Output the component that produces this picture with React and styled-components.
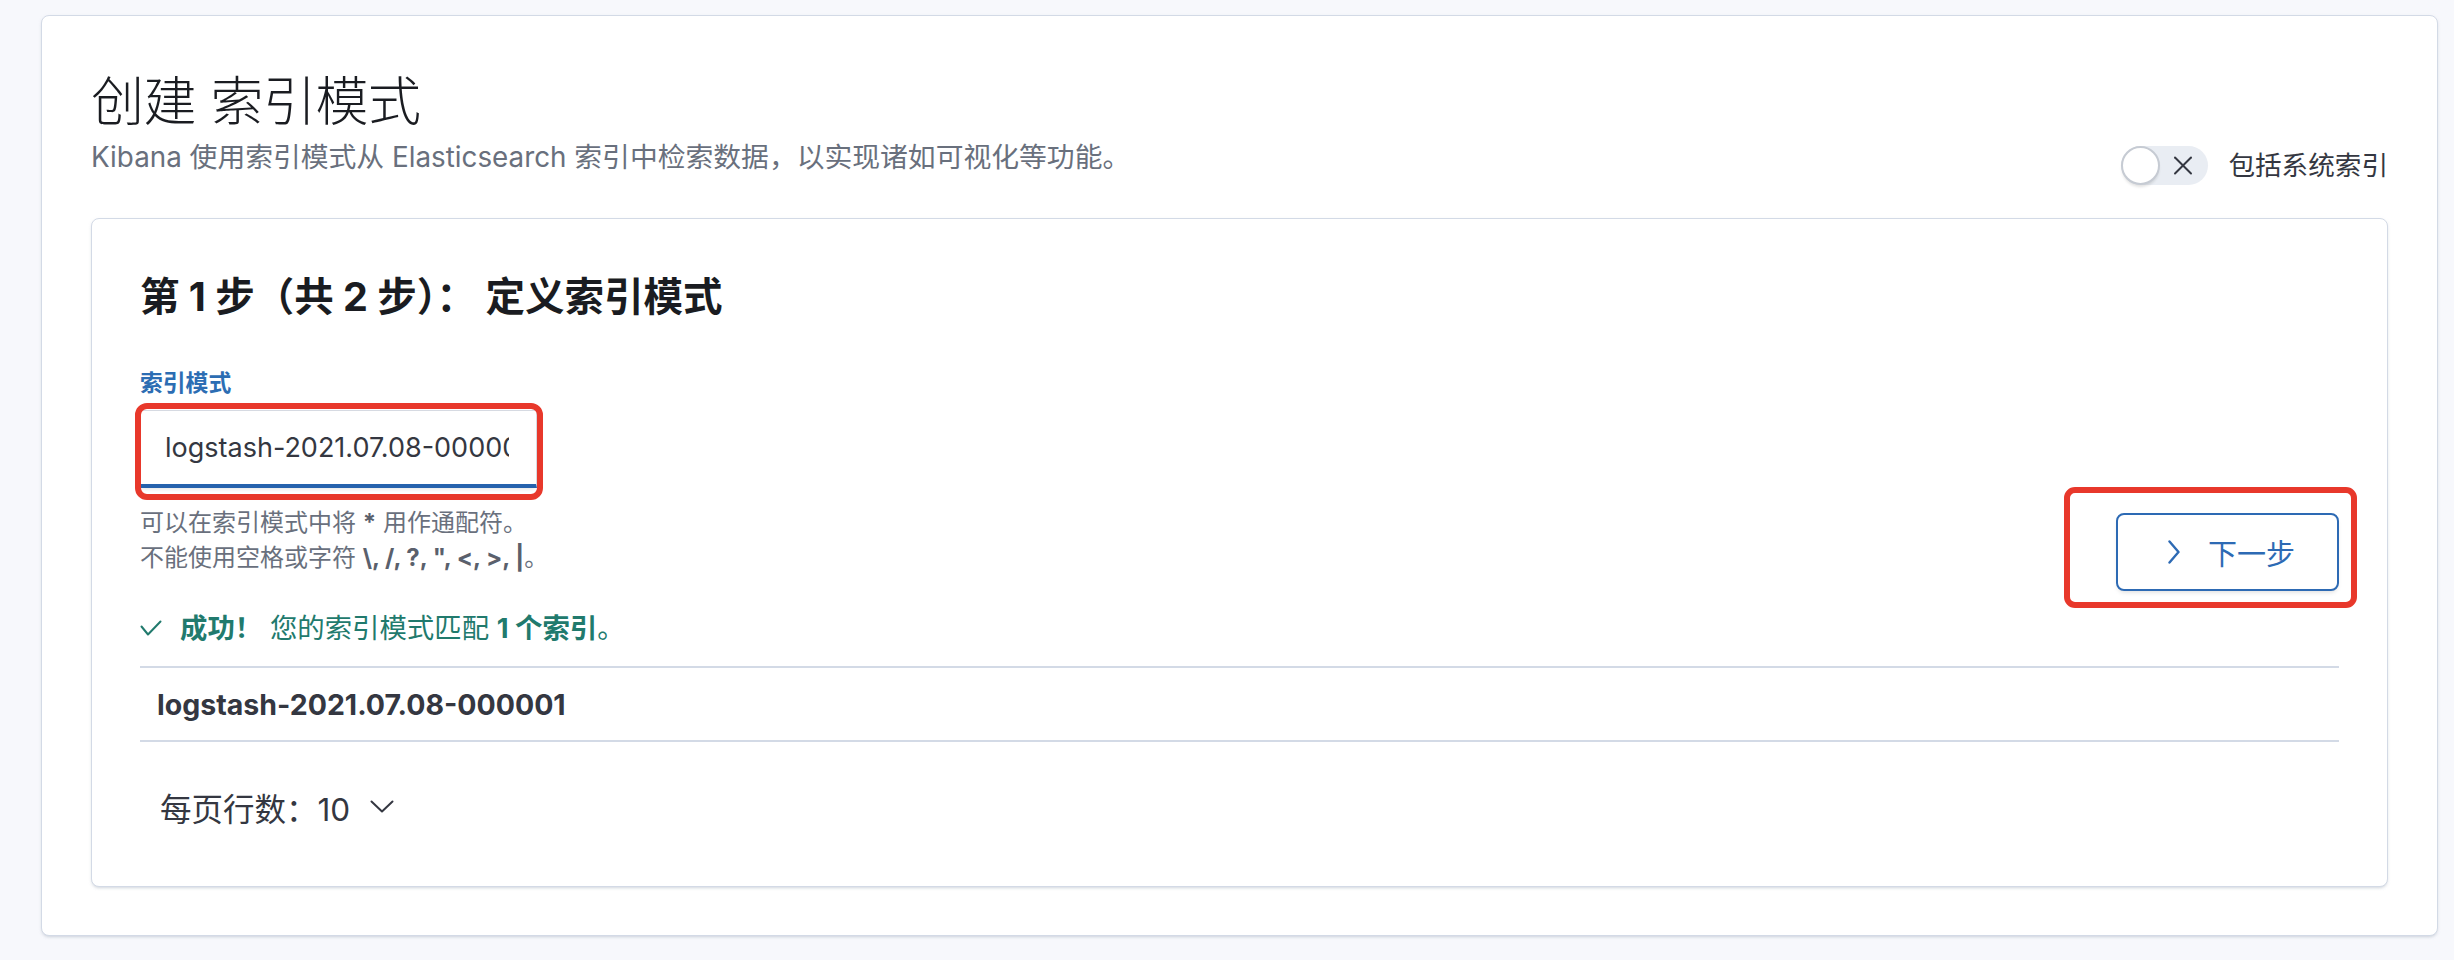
import React from 'react';
import styled, { createGlobalStyle } from 'styled-components';

const GlobalStyle = createGlobalStyle`
  html, body { margin: 0; padding: 0; background: #f7f8fc; }
  body {
    font-family: Inter, "Noto Sans CJK SC", sans-serif;
    color: #343741;
    -webkit-font-smoothing: antialiased;
  }
  * { box-sizing: border-box; }
`;

const Page = styled.div`
  padding: 15px 16px 23px 41px;
`;

const Panel = styled.section`
  background: #fff;
  border: 1px solid #d3dae6;
  border-radius: 8px;
  box-shadow: 0 2px 3px -1px rgba(152, 162, 179, 0.35), 0 1px 5px -2px rgba(152, 162, 179, 0.3);
  padding: ${(p) => p.$pad};
`;

const Header = styled.header`
  display: flex;
  justify-content: space-between;
  align-items: flex-end;
  margin-bottom: 33px;
`;

const HeaderText = styled.div`
  display: flex;
  flex-direction: column;
`;

const PageTitle = styled.h1`
  margin: 0;
  font-family: Inter, "Noto Sans CJK SC Light", "Noto Sans CJK SC", sans-serif;
  font-size: 53px;
  line-height: 76px;
  font-weight: 300;
  color: #1a1c21;
  letter-spacing: -0.5px;
`;

const Description = styled.p`
  margin: 0 0 11px;
  font-size: 27.8px;
  line-height: 34px;
  color: #69707d;
`;

const SwitchWrap = styled.label`
  display: flex;
  align-items: center;
  gap: 20px;
  font-size: 26.6px;
  line-height: 39px;
  color: #343741;
`;

const SwitchTrack = styled.span`
  position: relative;
  display: flex;
  align-items: center;
  width: 87px;
  height: 39px;
  padding-left: 52px;
  border-radius: 20px;
  background: #e9edf3;
`;

const SwitchThumb = styled.span`
  position: absolute;
  left: 0;
  top: 0;
  width: 39px;
  height: 39px;
  border-radius: 50%;
  background: #fff;
  border: 2px solid #c6cbd3;
  box-shadow: 0 3px 3px -1px rgba(0, 0, 0, 0.12);
`;

const StepTitle = styled.h2`
  margin: 0;
  font-size: 39.5px;
  line-height: 60px;
  font-weight: 700;
  color: #1a1c21;
`;

const FormArea = styled.div`
  display: flex;
  justify-content: space-between;
  align-items: flex-start;
  margin-top: 42px;
`;

const FormColumn = styled.div`
  display: flex;
  flex-direction: column;
`;

const FieldLabel = styled.label`
  font-size: 22.8px;
  line-height: 28px;
  font-weight: 600;
  color: #2c6db3;
  margin-bottom: 13px;
`;

const FieldWrap = styled.div`
  position: relative;
  width: 397px;
`;

const TextField = styled.input`
  display: block;
  width: 100%;
  height: 78px;
  padding: 0 27px 0 24px;
  border: 1px solid #d6dae2;
  border-bottom: 4px solid #2662ad;
  border-radius: 0;
  background: #fff;
  font-family: Inter, "Noto Sans CJK SC", sans-serif;
  font-size: 27px;
  color: #343741;
  outline: none;
  box-shadow: 0 3px 4px -2px rgba(0, 0, 0, 0.12);
`;

const Annotation = styled.span`
  position: absolute;
  top: ${(p) => p.$t}px;
  left: ${(p) => p.$l}px;
  right: ${(p) => p.$r}px;
  bottom: ${(p) => p.$b}px;
  border: 6px solid #e8382b;
  border-radius: ${(p) => p.$radius}px;
  pointer-events: none;
`;

const HelpText = styled.div`
  margin-top: 17px;
  font-size: 24px;
  line-height: 35px;
  color: #69707d;

  strong {
    font-weight: 700;
    color: #5a606c;
  }
`;

const NextButtonWrap = styled.div`
  position: relative;
  margin-top: 144px;
  margin-bottom: -16px;
`;

const NextButton = styled.button`
  display: flex;
  align-items: center;
  justify-content: center;
  gap: 28px;
  width: 223px;
  height: 78px;
  padding: 0 0 0 8px;
  border: 2px solid #2d6ab4;
  border-radius: 8px;
  background: #fff;
  color: #2d6ab4;
  font-family: Inter, "Noto Sans CJK SC", sans-serif;
  font-size: 29px;
  box-shadow: 0 3px 5px -2px rgba(0, 0, 0, 0.15);
  cursor: pointer;
`;

const Success = styled.div`
  display: flex;
  align-items: center;
  gap: 18px;
  margin-top: 33px;
  font-size: 27.4px;
  line-height: 40px;
  color: #217a6d;

  strong {
    font-weight: 700;
  }
`;

const Table = styled.div`
  margin-top: 18px;
  border-top: 2px solid #d3dae6;
  border-bottom: 2px solid #d3dae6;
`;

const Row = styled.div`
  display: flex;
  align-items: center;
  height: 72px;
  padding: 0 17px;
  font-size: 28.5px;
  font-weight: 700;
  color: #343741;
`;

const Pagination = styled.button`
  display: flex;
  align-items: center;
  gap: 20px;
  height: 63px;
  margin-top: 33px;
  padding: 0 20px;
  border: none;
  background: transparent;
  font-family: Inter, "Noto Sans CJK SC", sans-serif;
  font-size: 31.5px;
  color: #343741;
`;

const XIcon = () => (
  <svg width="20" height="19" viewBox="0 0 20 19" fill="none" stroke="#343741" strokeWidth="2" strokeLinecap="round">
    <line x1="2" y1="1.5" x2="18" y2="17.5" />
    <line x1="18" y1="1.5" x2="2" y2="17.5" />
  </svg>
);

const ChevronRight = () => (
  <svg width="12" height="24" viewBox="0 0 12 24" fill="none" stroke="#2d6ab4" strokeWidth="2.4" strokeLinecap="round" strokeLinejoin="round">
    <polyline points="1.5,1.5 10.5,12 1.5,22.5" />
  </svg>
);

const CheckIcon = () => (
  <svg width="22" height="16" viewBox="0 0 22 16" fill="none" stroke="#217a6d" strokeWidth="2" strokeLinecap="round" strokeLinejoin="round">
    <polyline points="1.5,6.5 8,14.5 20.5,1.5" />
  </svg>
);

const ChevronDown = () => (
  <svg width="24" height="13" viewBox="0 0 24 13" fill="none" stroke="#343741" strokeWidth="2" strokeLinecap="round" strokeLinejoin="round">
    <polyline points="1.5,1.5 12,11.5 22.5,1.5" />
  </svg>
);

export default function App() {
  return (
    <Page>
      <GlobalStyle />
      <Panel $pad="48px 49px 48px 49px">
        <Header>
          <HeaderText>
            <PageTitle>创建 索引模式</PageTitle>
            <Description>
              Kibana 使用索引模式从 Elasticsearch 索引中检索数据，以实现诸如可视化等功能。
            </Description>
          </HeaderText>
          <SwitchWrap>
            <SwitchTrack>
              <SwitchThumb />
              <XIcon />
            </SwitchTrack>
            包括系统索引
          </SwitchWrap>
        </Header>

        <Panel $pad="48px 48px 48px 48px">
          <StepTitle>第 1 步（共 2 步）： 定义索引模式</StepTitle>
          <FormArea>
            <FormColumn>
              <FieldLabel htmlFor="pattern">索引模式</FieldLabel>
              <FieldWrap>
                <TextField id="pattern" readOnly value="logstash-2021.07.08-000001" />
                <Annotation $t={-7} $l={-5} $r={-6} $b={-12} $radius={12} />
              </FieldWrap>
              <HelpText>
                <div>可以在索引模式中将 <strong>*</strong> 用作通配符。</div>
                <div>
                  不能使用空格或字符 <strong>\, /, ?, ", &lt;, &gt;, |</strong>。
                </div>
              </HelpText>
            </FormColumn>
            <NextButtonWrap>
              <NextButton>
                <ChevronRight />
                下一步
              </NextButton>
              <Annotation $t={-26} $l={-52} $r={-18} $b={-17} $radius={11} />
            </NextButtonWrap>
          </FormArea>

          <Success>
            <CheckIcon />
            <span>
              <strong>成功！</strong> 您的索引模式匹配 <strong>1 个索引</strong>。
            </span>
          </Success>

          <Table>
            <Row>logstash-2021.07.08-000001</Row>
          </Table>

          <Pagination>
            每页行数：10
            <ChevronDown />
          </Pagination>
        </Panel>
      </Panel>
    </Page>
  );
}
